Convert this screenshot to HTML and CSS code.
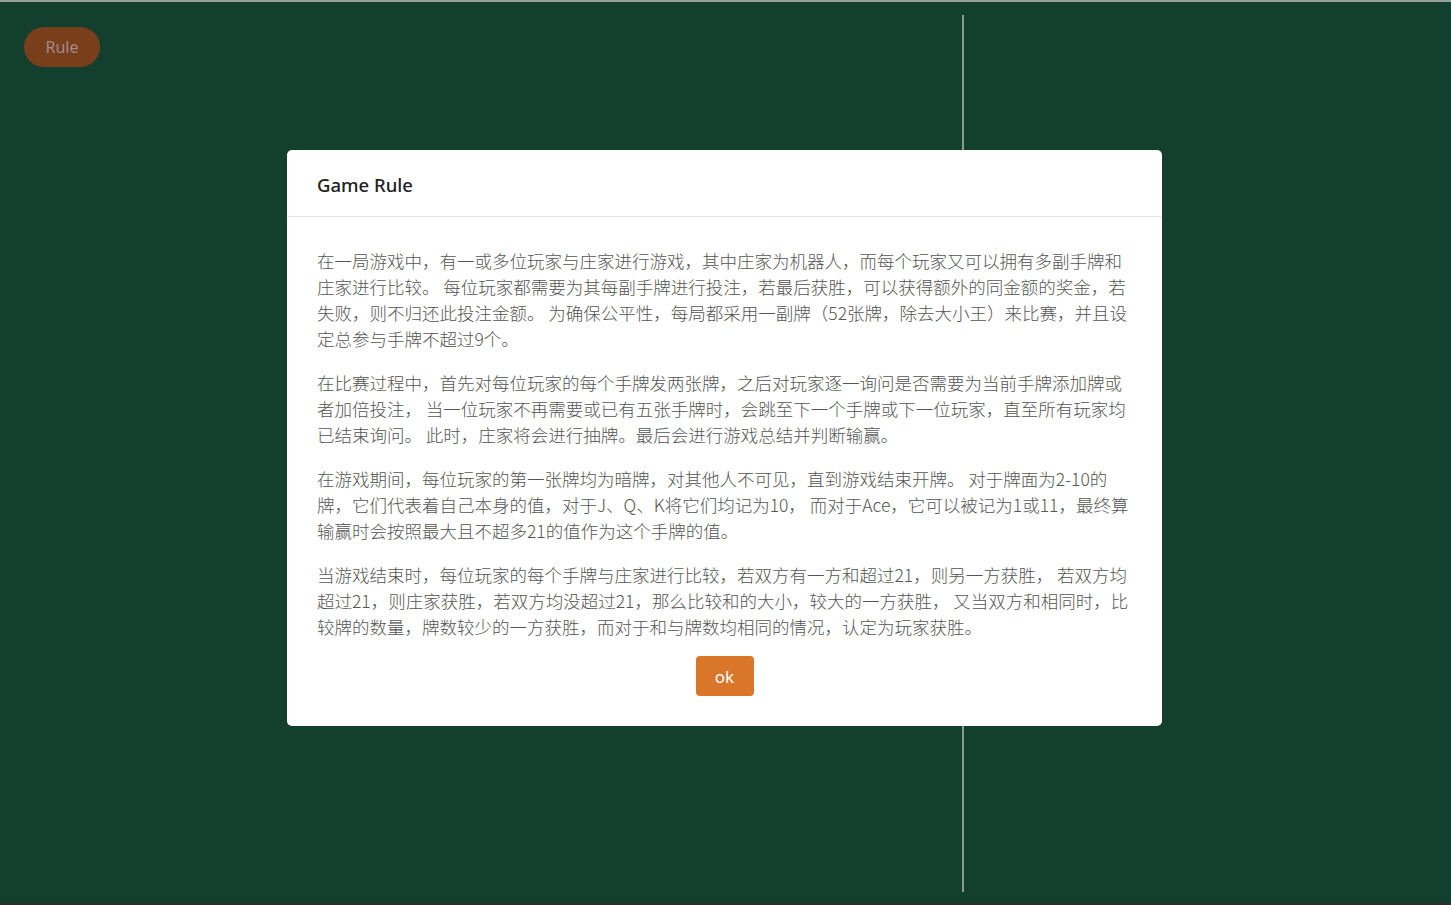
FILE: index.html
```html
<!DOCTYPE html>
<html lang="zh-CN">
<head>
<meta charset="utf-8">
<title>Game Rule</title>
<link rel="stylesheet" href="styles.css">
</head>
<body>
<div class="page">
  <div class="table-left">
    <button class="rule-btn" type="button">Rule</button>
  </div>
  <div class="divider"></div>
  <div class="table-right"></div>
</div>

<div class="overlay">
  <div class="modal">
    <div class="modal-header">Game Rule</div>
    <div class="modal-body">
      <p>在一局游戏中，有一或多位玩家与庄家进行游戏，其中庄家为机器人，而每个玩家又可以拥有多副手牌和庄家进行比较。 每位玩家都需要为其每副手牌进行投注，若最后获胜，可以获得额外的同金额的奖金，若失败，则不归还此投注金额。 为确保公平性，每局都采用一副牌（52张牌，除去大小王）来比赛，并且设定总参与手牌不超过9个。</p>
      <p>在比赛过程中，首先对每位玩家的每个手牌发两张牌，之后对玩家逐一询问是否需要为当前手牌添加牌或者加倍投注， 当一位玩家不再需要或已有五张手牌时，会跳至下一个手牌或下一位玩家，直至所有玩家均已结束询问。 此时，庄家将会进行抽牌。最后会进行游戏总结并判断输赢。</p>
      <p>在游戏期间，每位玩家的第一张牌均为暗牌，对其他人不可见，直到游戏结束开牌。 对于牌面为2-10的牌，它们代表着自己本身的值，对于J、Q、K将它们均记为10， 而对于Ace，它可以被记为1或11，最终算输赢时会按照最大且不超多21的值作为这个手牌的值。</p>
      <p>当游戏结束时，每位玩家的每个手牌与庄家进行比较，若双方有一方和超过21，则另一方获胜， 若双方均超过21，则庄家获胜，若双方均没超过21，那么比较和的大小，较大的一方获胜， 又当双方和相同时，比较牌的数量，牌数较少的一方获胜，而对于和与牌数均相同的情况，认定为玩家获胜。</p>
      <div class="modal-footer">
        <button class="ok-btn" type="button">ok</button>
      </div>
    </div>
  </div>
</div>
</body>
</html>
```

FILE: styles.css
```css
* { box-sizing: border-box; }

html, body {
  margin: 0;
  padding: 0;
  height: 100%;
}

body {
  background: #13402e;
  font-family: "Noto Sans", "Noto Sans CJK SC", sans-serif;
  border-top: 2px solid #9b9f9c;
  border-bottom: 2px solid #2b2f2d;
  overflow: hidden;
}

.page {
  display: flex;
  height: 100%;
}

.table-left {
  width: 962px;
  padding: 25px 0 0 24px;
}

.rule-btn {
  width: 76px;
  height: 40px;
  border: none;
  border-radius: 20px;
  background: #793e1a;
  color: #a58a8c;
  font-family: "Noto Sans", sans-serif;
  font-size: 16px;
  padding: 0;
  cursor: pointer;
}

.divider {
  width: 2px;
  margin: 13px 0 11px;
  background: #8a9a91;
}

.table-right {
  flex: 1;
}

.overlay {
  position: fixed;
  inset: 0;
  display: flex;
  justify-content: center;
  align-items: flex-start;
  padding: 150px 2px 0 0;
}

.modal {
  width: 875px;
  background: #fff;
  border-radius: 5px;
}

.modal-header {
  height: 67px;
  padding: 2px 30px 0;
  display: flex;
  align-items: center;
  border-bottom: 1px solid #e6e6e6;
  font-family: "Noto Sans", sans-serif;
  font-size: 18.5px;
  font-weight: 500;
  color: #222;
}

.modal-body {
  padding: 31px 30px 30px;
  display: flex;
  flex-direction: column;
  gap: 18px;
}

.modal-body p {
  margin: 0;
  font-family: "Noto Sans CJK SC", sans-serif;
  font-size: 17.5px;
  font-weight: 300;
  line-height: 26px;
  color: #555;
}

.modal-footer {
  display: flex;
  justify-content: center;
  margin-top: -2px;
}

.ok-btn {
  width: 58px;
  height: 40px;
  border: none;
  border-radius: 4px;
  background: #d9762a;
  color: #fff;
  font-family: "Noto Sans", sans-serif;
  font-size: 17px;
  padding: 0;
  cursor: pointer;
}
```
